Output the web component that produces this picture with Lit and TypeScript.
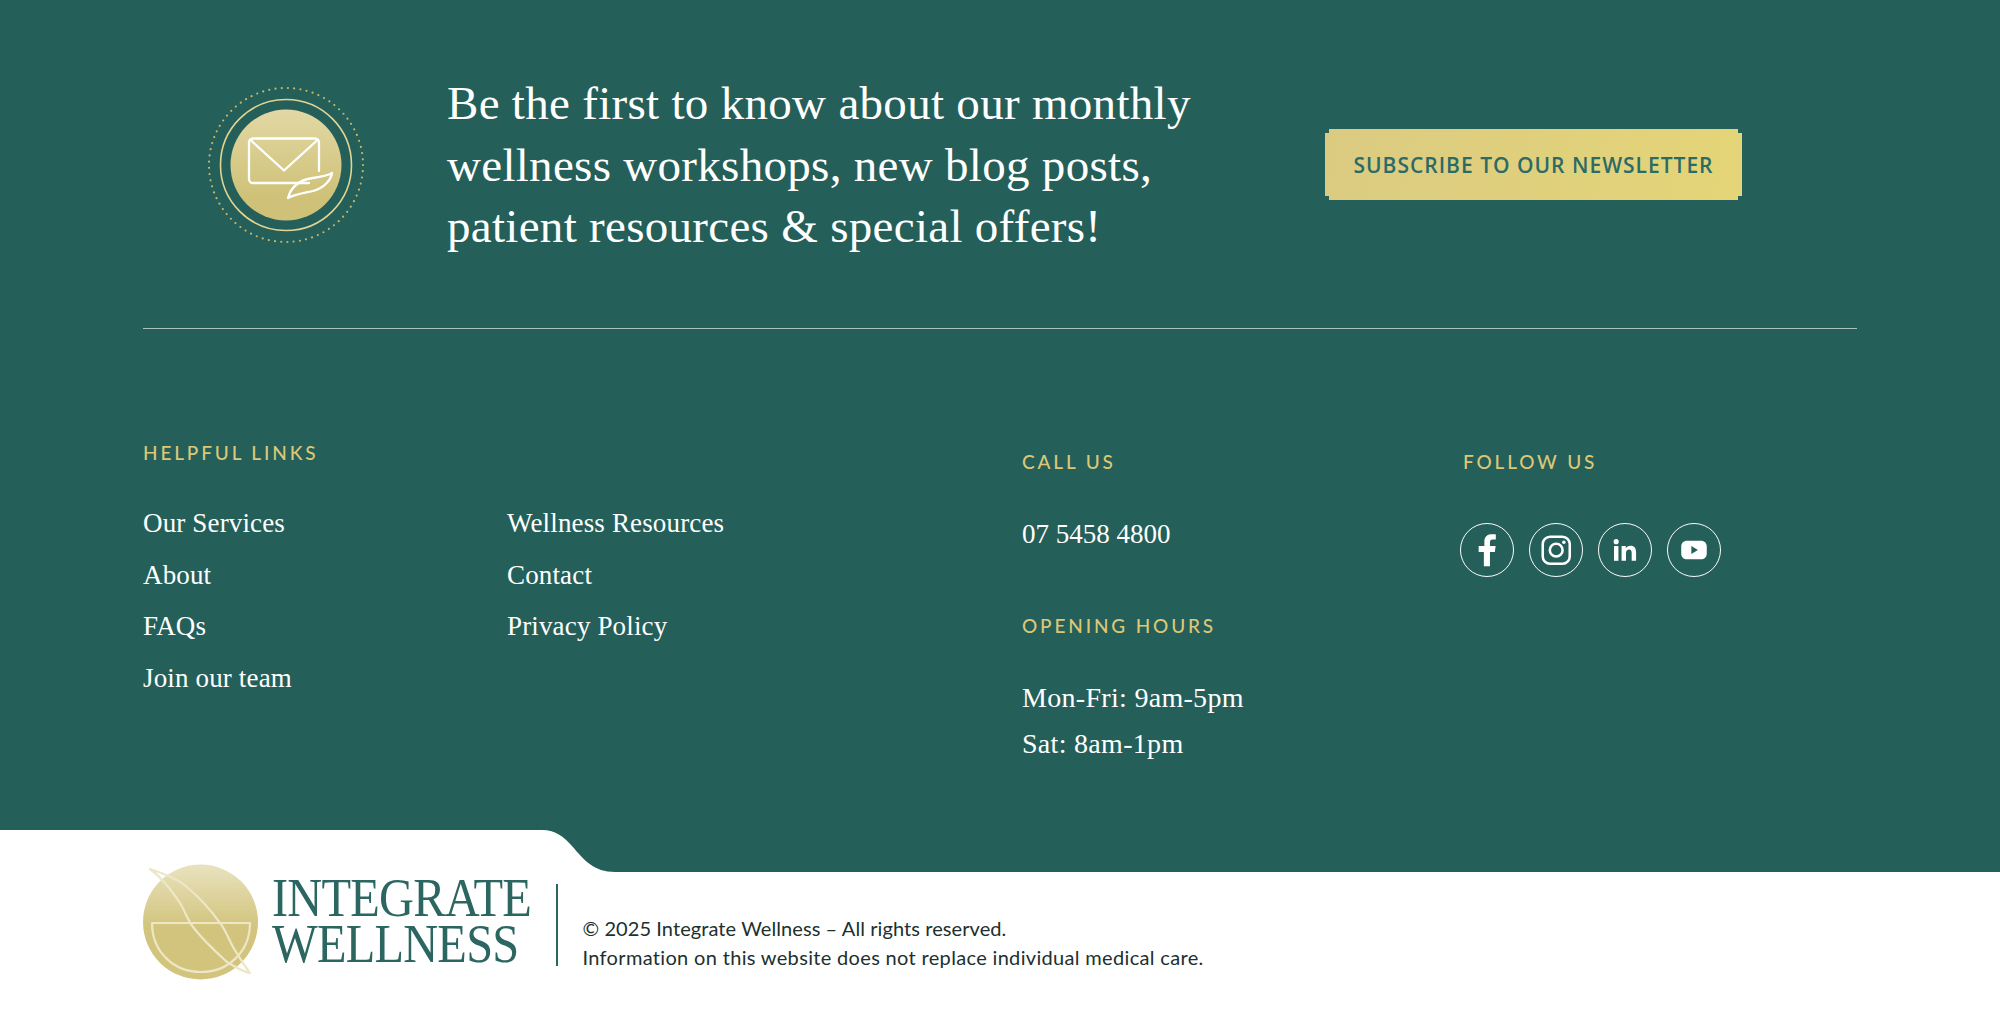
import { LitElement, html, css } from 'lit';
import { customElement } from 'lit/decorators.js';

const linksLeft = ['Our Services', 'About', 'FAQs', 'Join our team'];
const linksRight = ['Wellness Resources', 'Contact', 'Privacy Policy'];

@customElement('app-root')
export class AppRoot extends LitElement {
  static styles = css`
    :host {
      display: block;
      width: 2000px;
      height: 1016px;
      overflow: hidden;
      background: #fff;
      font-family: 'Liberation Serif', serif;
    }

    .green {
      background: #255f59;
      height: 872px;
      padding: 0 143px;
      box-sizing: border-box;
      color: #fff;
    }

    .news {
      height: 329px;
      border-bottom: 1px solid #a9c4b4;
      box-sizing: border-box;
      display: flex;
      align-items: center;
      padding: 1px 0 0 63px;
    }

    .badge {
      width: 160px;
      height: 160px;
      display: block;
      flex: none;
    }

    .headline {
      margin: 2px 0 0 81px;
      width: 878px;
      font-size: 47px;
      font-weight: 400;
      line-height: 61.5px;
      letter-spacing: 0.3px;
    }

    .cta {
      width: 417px;
      height: 71px;
      display: flex;
      align-items: center;
      justify-content: center;
      background: linear-gradient(100deg, #dbcb82, #e4d578);
      clip-path: polygon(
        4px 0, calc(100% - 4px) 0, calc(100% - 4px) 4px, 100% 4px,
        100% calc(100% - 4px), calc(100% - 4px) calc(100% - 4px), calc(100% - 4px) 100%,
        4px 100%, 4px calc(100% - 4px), 0 calc(100% - 4px), 0 4px, 4px 4px
      );
      font-family: 'Open Sans', sans-serif;
      font-size: 21px;
      font-weight: 600;
      letter-spacing: 1px;
      color: #2b6b66;
    }

    .cols {
      display: grid;
      grid-template-columns: 879px 441px 1fr;
    }

    .label {
      margin: 0;
      font-family: 'Lato', sans-serif;
      font-size: 19px;
      font-weight: 500;
      letter-spacing: 2.85px;
      line-height: 24px;
      color: #dcc777;
    }

    .helpful {
      padding-top: 112px;
    }

    .link-cols {
      display: grid;
      grid-template-columns: 364px 1fr;
      margin-top: 33px;
    }

    .link {
      font-size: 27px;
      letter-spacing: 0.15px;
      line-height: 51.5px;
    }

    .call {
      padding-top: 121px;
    }

    .phone {
      font-size: 27px;
      line-height: 36px;
      margin-top: 42px;
    }

    .hours-label {
      margin-top: 62px;
    }

    .hours {
      margin-top: 37px;
      font-size: 28px;
      letter-spacing: 0.3px;
      line-height: 46px;
    }

    .follow {
      padding-top: 121px;
    }

    .social {
      display: flex;
      gap: 15px;
      margin: 49px 0 0 -3px;
    }

    .social svg {
      width: 54px;
      height: 54px;
      display: block;
    }

    .bottom {
      position: relative;
      margin-top: -42px;
      height: 186px;
      padding: 34px 143px 0;
      box-sizing: border-box;
      display: flex;
      align-items: flex-start;
    }

    .notch {
      position: absolute;
      left: 0;
      top: 0;
      width: 640px;
      height: 42px;
      display: block;
    }

    .mark {
      position: relative;
      width: 116px;
      height: 118px;
      flex: none;
      display: block;
      overflow: visible;
    }

    .word {
      position: relative;
      margin: 11px 0 0 13px;
      width: 270px;
      flex: none;
      font-size: 55px;
      line-height: 46px;
      letter-spacing: -0.9px;
      color: #2b6661;
      transform: scaleX(0.88);
      transform-origin: left;
    }

    .sep {
      position: relative;
      width: 1.5px;
      height: 82px;
      margin: 20px 0 0 14px;
      background: #2b6661;
    }

    .legal {
      position: relative;
      margin: 50px 0 0 25px;
      font-family: 'Lato', sans-serif;
      font-size: 20px;
      letter-spacing: 0.33px;
      line-height: 28.5px;
      color: #20302f;
    }

    .legal-first {
      letter-spacing: 0.08px;
    }
  `;

  render() {
    return html`
      <div class="green">
        <section class="news">
          <svg class="badge" viewBox="0 0 160 160">
            <defs>
              <linearGradient id="bg" x1="0" y1="0" x2="0" y2="1">
                <stop offset="0" stop-color="#e2d8a4" />
                <stop offset="0.8" stop-color="#cfc177" />
              </linearGradient>
            </defs>
            <circle cx="80" cy="80" r="77" fill="none" stroke="#c9b765" stroke-width="2.2" stroke-linecap="round" stroke-dasharray="0 6.28" />
            <circle cx="80" cy="80" r="65.5" fill="none" stroke="#e2d592" stroke-width="1.6" />
            <circle cx="80" cy="80" r="55.5" fill="url(#bg)" />
            <g fill="none" stroke="#fff" stroke-width="2.3" stroke-linejoin="round" stroke-linecap="round">
              <path d="M103 98H47a4 4 0 0 1-4-4V57.500a4 4 0 0 1 4-4h62a4 4 0 0 1 4 4V86" />
              <path d="M44.500 55L78 85.500L111.500 55" />
              <path d="M82 113C85 102 92 95 107 93C114 92 121 91 126 88C125 95 118 103 107 106C98 108 90 109 82 113Z" />
            </g>
          </svg>
          <h2 class="headline">
            Be the first to know about our monthly<br />wellness workshops, new blog posts,<br />patient
            resources &amp; special offers!
          </h2>
          <div class="cta">SUBSCRIBE TO OUR NEWSLETTER</div>
        </section>

        <div class="cols">
          <div class="helpful">
            <h3 class="label">HELPFUL LINKS</h3>
            <div class="link-cols">
              <div>${linksLeft.map(l => html`<div class="link">${l}</div>`)}</div>
              <div>${linksRight.map(l => html`<div class="link">${l}</div>`)}</div>
            </div>
          </div>
          <div class="call">
            <h3 class="label">CALL US</h3>
            <div class="phone">07 5458 4800</div>
            <h3 class="label hours-label">OPENING HOURS</h3>
            <div class="hours">Mon-Fri: 9am-5pm<br />Sat: 8am-1pm</div>
          </div>
          <div class="follow">
            <h3 class="label">FOLLOW US</h3>
            <div class="social">
              <svg viewBox="0 0 55 55">
                <circle cx="27.500" cy="27.500" r="27" fill="none" stroke="#fff" />
                <path fill="#fff" d="M30.500 44V29.500h5l.8-6h-5.800v-3.600c0-1.800.6-3 3-3h3V11.600c-.6-.1-2.400-.2-4.400-.2-4.400 0-7.300 2.600-7.300 7.500v4.600H19v6h5.300V44z" />
              </svg>
              <svg viewBox="0 0 55 55">
                <circle cx="27.500" cy="27.500" r="27" fill="none" stroke="#fff" />
                <rect x="14" y="14" width="27.500" height="27.500" rx="7.500" fill="none" stroke="#fff" stroke-width="2.600" />
                <circle cx="27.700" cy="27.700" r="6.500" fill="none" stroke="#fff" stroke-width="2.600" />
                <circle cx="35.500" cy="19.500" r="1.800" fill="#fff" />
              </svg>
              <svg viewBox="0 0 55 55">
                <circle cx="27.500" cy="27.500" r="27" fill="none" stroke="#fff" />
                <circle cx="18.500" cy="19" r="2.600" fill="#fff" />
                <rect x="16.300" y="23.500" width="4.500" height="15" fill="#fff" />
                <path fill="#fff" d="M24 23.500h4.300v2.100c.9-1.500 2.600-2.500 4.700-2.500 4.200 0 5.800 2.600 5.800 6.800v8.600h-4.500v-7.800c0-2.200-.6-3.700-2.500-3.700-2.100 0-3.300 1.500-3.300 3.900v7.600H24z" />
              </svg>
              <svg viewBox="0 0 55 55">
                <circle cx="27.500" cy="27.500" r="27" fill="none" stroke="#fff" />
                <path fill="#fff" fill-rule="evenodd" d="M20.500 18h14c3.600 0 6 2.400 6 6v7c0 3.600-2.400 6-6 6h-14c-3.600 0-6-2.400-6-6v-7c0-3.600 2.400-6 6-6zM24.800 23.500v8l6.700-4z" />
              </svg>
            </div>
          </div>
        </div>
      </div>

      <div class="bottom">
        <svg class="notch" viewBox="0 0 640 42">
          <path fill="#fff" d="M0 0H542C556 0 564 7 572 16C584 30 594 42 615 42H640V43H0Z" />
        </svg>
        <svg class="mark" viewBox="0 0 116 118">
          <defs>
            <linearGradient id="lg" x1="0" y1="0" x2="0" y2="1">
              <stop offset="0" stop-color="#e9e2bf" />
              <stop offset="0.55" stop-color="#d2c47c" />
            </linearGradient>
          </defs>
          <circle cx="57.500" cy="58" r="57.500" fill="url(#lg)" />
          <g fill="none" stroke="#eee7c6" stroke-width="2.200" stroke-linejoin="round">
            <path d="M7 5C22 10 35 15 44 23C58 35 68 46 77 59C84 68 87 79 93 88C97 94 102 103 107 109C101 108 92 103 84 98C74 89 60 76 50 63C44 55 42 47 37 39C31 30 22 16 7 5Z" />
            <path d="M9 59H107C107 88 85 108 58 108C31 108 9 88 9 59Z" />
          </g>
        </svg>
        <div class="word">INTEGRATE<br />WELLNESS</div>
        <div class="sep"></div>
        <div class="legal">
          <span class="legal-first">© 2025 Integrate Wellness – All rights reserved.</span><br />Information on this
          website does not replace individual medical care.
        </div>
      </div>
    `;
  }
}
